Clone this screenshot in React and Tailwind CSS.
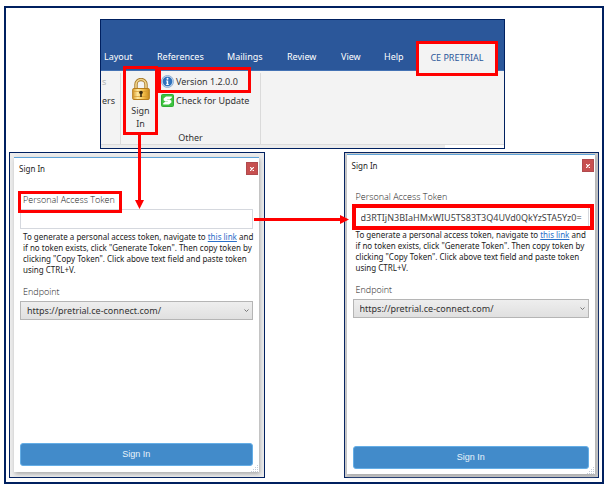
import React, { useId } from "react";

const tabs = [
  { name: "Layout", className: "w-[53px]" },
  { name: "References", className: "w-[70px]" },
  { name: "Mailings", className: "w-[60px]" },
  { name: "Review", className: "w-[54px]" },
  { name: "View", className: "w-[43px]" },
  { name: "Help", className: "w-[35px]" },
];

function LockIcon() {
  return (
    <svg viewBox="0 0 18 22" className="h-[22px] w-[18px] shrink-0" aria-hidden="true">
      <defs>
        <linearGradient id="lockBody" x1="0" x2="1">
          <stop offset="0" stopColor="#d79a2b" />
          <stop offset="0.3" stopColor="#ffe9a0" />
          <stop offset="0.65" stopColor="#f3bd49" />
          <stop offset="1" stopColor="#c98a1c" />
        </linearGradient>
      </defs>
      <path d="M4 12V6.5a5 5 0 0 1 10 0V12" fill="none" stroke="#a87a2a" strokeWidth="3.4" />
      <path d="M4 12V6.5a5 5 0 0 1 10 0V12" fill="none" stroke="#f0d48c" strokeWidth="1.6" />
      <rect x="0.7" y="10.5" width="16.6" height="11" rx="1" fill="url(#lockBody)" stroke="#b67c1c" />
      <path d="M1.5 13.5h15M1.5 18.5h15" stroke="#d69a30" strokeWidth="0.7" />
      <circle cx="9" cy="14.5" r="1.8" fill="#3a2a10" />
      <path d="M8.2 14.5h1.6v4.5H8.2z" fill="#3a2a10" />
    </svg>
  );
}

function InfoIcon() {
  return (
    <svg viewBox="0 0 13 13" className="h-[13px] w-[13px] shrink-0" aria-hidden="true">
      <circle cx="6.5" cy="6.5" r="6" fill="#c9dcf0" stroke="#8fb0d6" />
      <circle cx="6.5" cy="6.5" r="4.8" fill="#2f72bd" />
      <circle cx="6.5" cy="3.8" r="1" fill="#fff" />
      <path d="M5.2 5.6h2v3.6h.8v.8H5v-.8h.7V6.4h-.5z" fill="#fff" />
    </svg>
  );
}

function UpdateIcon() {
  return (
    <svg viewBox="0 0 13 13" className="h-[13px] w-[13px] shrink-0" aria-hidden="true">
      <rect x="0.5" y="0.5" width="12" height="12" rx="1" fill="#3dc23f" stroke="#2fae33" />
      <path d="M10.800 2.400H5L2.600 4.400v1.800L4.400 7.400H8L5.800 5.200h3l2-1.400z" fill="#fff" />
      <path d="M2.200 10.600H8l2.400-2V6.800L8.600 5.600H5l2.200 2.200h-3l-2 1.400z" fill="#fff" />
    </svg>
  );
}

function Highlight({ className }) {
  return <span aria-hidden="true" className={`pointer-events-none absolute z-10 border-[#ff0000] ${className}`} />;
}

function Ribbon() {
  return (
    <section className="relative z-20 mr-[97px] ml-[94px] flex h-[130px] flex-col border border-[#002060] bg-[#f3f3f3]">
      <nav className="flex h-[51px] shrink-0 items-end border-b border-[#4472b4] bg-[#2b579a] pl-[3px] text-[9px] leading-[26px] text-white">
        {tabs.map((tab) => (
          <button key={tab.name} className={`shrink-0 text-left whitespace-nowrap ${tab.className}`}>
            {tab.name}
          </button>
        ))}
        <button className="relative -mb-px h-[27px] w-[76px] shrink-0 bg-[#f3f3f3] text-center whitespace-nowrap text-[#2b579a]">
          CE PRETRIAL
          <Highlight className="-top-[3px] -right-[3px] -bottom-[5px] -left-[3px] border-[3px]" />
        </button>
      </nav>
      <div className="flex flex-1 pt-[2px] text-[9px] leading-[13px] text-[#333]">
        <div className="flex w-5 flex-col gap-[6px] overflow-hidden border-r border-[#dadada] pt-[2px] pl-px">
          <span className="text-[#b5b5b5]">s</span>
          <span>ers</span>
        </div>
        <div className="flex w-[140px] flex-col border-r border-[#dadada]">
          <div className="flex flex-1">
            <button className="relative ml-[2px] flex w-[35px] shrink-0 flex-col items-center pt-[5px]">
              <LockIcon />
              <span className="mt-[4px]">Sign</span>
              <span>In</span>
              <Highlight className="-top-[7px] right-0 -bottom-[4px] left-0 border-[3px]" />
              <svg viewBox="0 0 9 74" className="pointer-events-none absolute top-[62px] left-[12px] z-10 h-[74px] w-[9px]" aria-hidden="true">
                <path d="M3 0h3v65h3L4.500 74 0 65h3z" fill="#ff0000" />
              </svg>
            </button>
            <div className="flex flex-col gap-[6px] pt-[2px] pl-[3px]">
              <div className="relative flex items-center gap-[2px] whitespace-nowrap">
                <InfoIcon />
                Version 1.2.0.0
              </div>
              <button className="flex items-center gap-[2px] whitespace-nowrap">
                <UpdateIcon />
                Check for Update
              </button>
            </div>
          </div>
          <div className="text-center">Other</div>
        </div>
      </div>
      <div className="h-1 shrink-0 border-t border-[#dcdcdc] bg-[#ebebeb] pl-[344px]">
        <div className="h-full bg-white" />
      </div>
      <Highlight className="top-[47px] left-[57px] h-[26px] w-[93px] border-[3px]" />
    </section>
  );
}

function SignInDialog({ token, framed, className, bodyClass, inputClass, fieldClass }) {
  const id = useId();
  return (
    <section className={`flex h-[326px] min-w-0 border border-[#002060] ${className}`}>
      <form
        onSubmit={(event) => event.preventDefault()}
        className={`relative flex min-w-0 flex-1 flex-col border-t border-[#5ea3d8] bg-white text-[#222] shadow-[1px_2px_4px_#aaa] ${bodyClass}`}
      >
        <div className="flex items-start justify-between pr-px pl-[5px] text-[8px] leading-[13px]">
          <h2 className="mt-[4px]">Sign In</h2>
          <button
            aria-label="Close"
            className="mt-[4px] flex h-[13px] w-[12px] items-center justify-center border border-[#b04a4e] bg-[#c75050]"
          >
            <svg viewBox="0 0 4 4" className="h-1 w-1" aria-hidden="true">
              <path d="M0 0l4 4M4 0L0 4" stroke="#fff" strokeWidth="1.2" />
            </svg>
          </button>
        </div>
        <div className="flex flex-1 flex-col px-[6px]">
          <div className='relative mt-[18px] ml-[3px] self-start font-["Open_Sans",sans-serif] text-[9px] leading-[14px] font-light whitespace-nowrap text-[#222]'>
            <label htmlFor={`${id}-token`}>Personal Access Token</label>
            {!framed && <Highlight className="-top-[2px] -left-[5px] h-[22px] w-[104px] border-[3px]" />}
          </div>
          <div className={`relative ${fieldClass}`}>
            <input
              id={`${id}-token`}
              type="text"
              defaultValue={token}
              className={`block h-5 w-full border border-[#d5d8de] bg-white text-[9px] text-[#444] outline-none ${inputClass}`}
            />
            {framed && <Highlight className="-inset-y-[3px] -right-[5px] -left-px border-[4px]" />}
          </div>
          <p className="mt-[2px] pl-[3px] text-[8px] leading-[11px] whitespace-nowrap text-[#222]">
            To generate a personal access token, navigate to{" "}
            <a href="#token" className="text-[#2a6fc9] underline">
              this link
            </a>{" "}
            and
            <br />
            if no token exists, click "Generate Token". Then copy token by
            <br />
            clicking "Copy Token". Click above text field and paste token
            <br />
            using CTRL+V.
          </p>
          <label
            htmlFor={`${id}-endpoint`}
            className='mt-[10px] pl-[3px] font-["Open_Sans",sans-serif] text-[9px] leading-[14px] font-light text-[#222]'
          >
            Endpoint
          </label>
          <div className="relative mt-[2px]">
            <select
              id={`${id}-endpoint`}
              className="block h-[19px] w-full appearance-none border border-[#b5b5b5] bg-linear-to-b from-[#eeeeee] to-[#e0e0e0] pl-[6px] text-[9px] leading-[16px] text-[#333]"
            >
              <option>https://pretrial.ce-connect.com/</option>
            </select>
            <svg viewBox="0 0 5 4" className="pointer-events-none absolute top-[8px] right-[4px] h-1 w-[5px]" aria-hidden="true">
              <path d="M0.500 0.500l2 2 2-2" fill="none" stroke="#777" />
            </svg>
          </div>
          <button
            className='mt-auto h-[23px] w-full rounded-[3px] border border-[#65aee6] bg-[#428bca] font-["Liberation_Sans",sans-serif] text-[9px] text-[#e9f3fb]'
          >
            Sign In
          </button>
        </div>
        <svg viewBox="0 0 8 8" className="absolute right-0 bottom-0 h-2 w-2" aria-hidden="true">
          <path d="M6 1.500h1M4 3.500h1M6 3.500h1M2 5.500h1M4 5.500h1M6 5.500h1M0 7.500h1M2 7.500h1M4 7.500h1M6 7.500h1" stroke="#c3cad6" />
        </svg>
      </form>
    </section>
  );
}

export default function App() {
  return (
    <div className='bg-white pt-[6px] pr-[4px] pb-[5px] pl-[4px] font-["Noto_Sans","Open_Sans",sans-serif]'>
      <main className="border-2 border-[#002060] pt-[11px] pb-[4px]">
        <Ribbon />
        <div className="mt-[3px] grid grid-cols-[minmax(0,1fr)_79px_minmax(0,1fr)] px-[3px]">
          <SignInDialog
            token=""
            className="bg-[#ececec] pt-1 pr-[5px] pb-[5px] pl-1"
            bodyClass="pb-[6px]"
            inputClass="px-[6px]"
            fieldClass="mt-[2px]"
          />
          <div className="relative z-20">
            <div className="absolute top-[63px] -right-[5px] -left-[11px] flex items-center">
              <div className="h-[3px] flex-1 bg-[#ff0000]" />
              <svg viewBox="0 0 9 9" className="h-[9px] w-[9px]" aria-hidden="true">
                <path d="M0 0l9 4.500L0 9z" fill="#ff0000" />
              </svg>
            </div>
          </div>
          <SignInDialog
            framed
            token="d3RTIjN3BIaHMxWIU5TS83T3Q4UVd0QkYzSTA5Yz0="
            className="bg-[#cccccc] pt-px pr-[3px] pb-[3px] pl-[2px]"
            bodyClass="pb-[5px]"
            inputClass="pl-[7px]"
            fieldClass="mt-[3px]"
          />
        </div>
      </main>
    </div>
  );
}
